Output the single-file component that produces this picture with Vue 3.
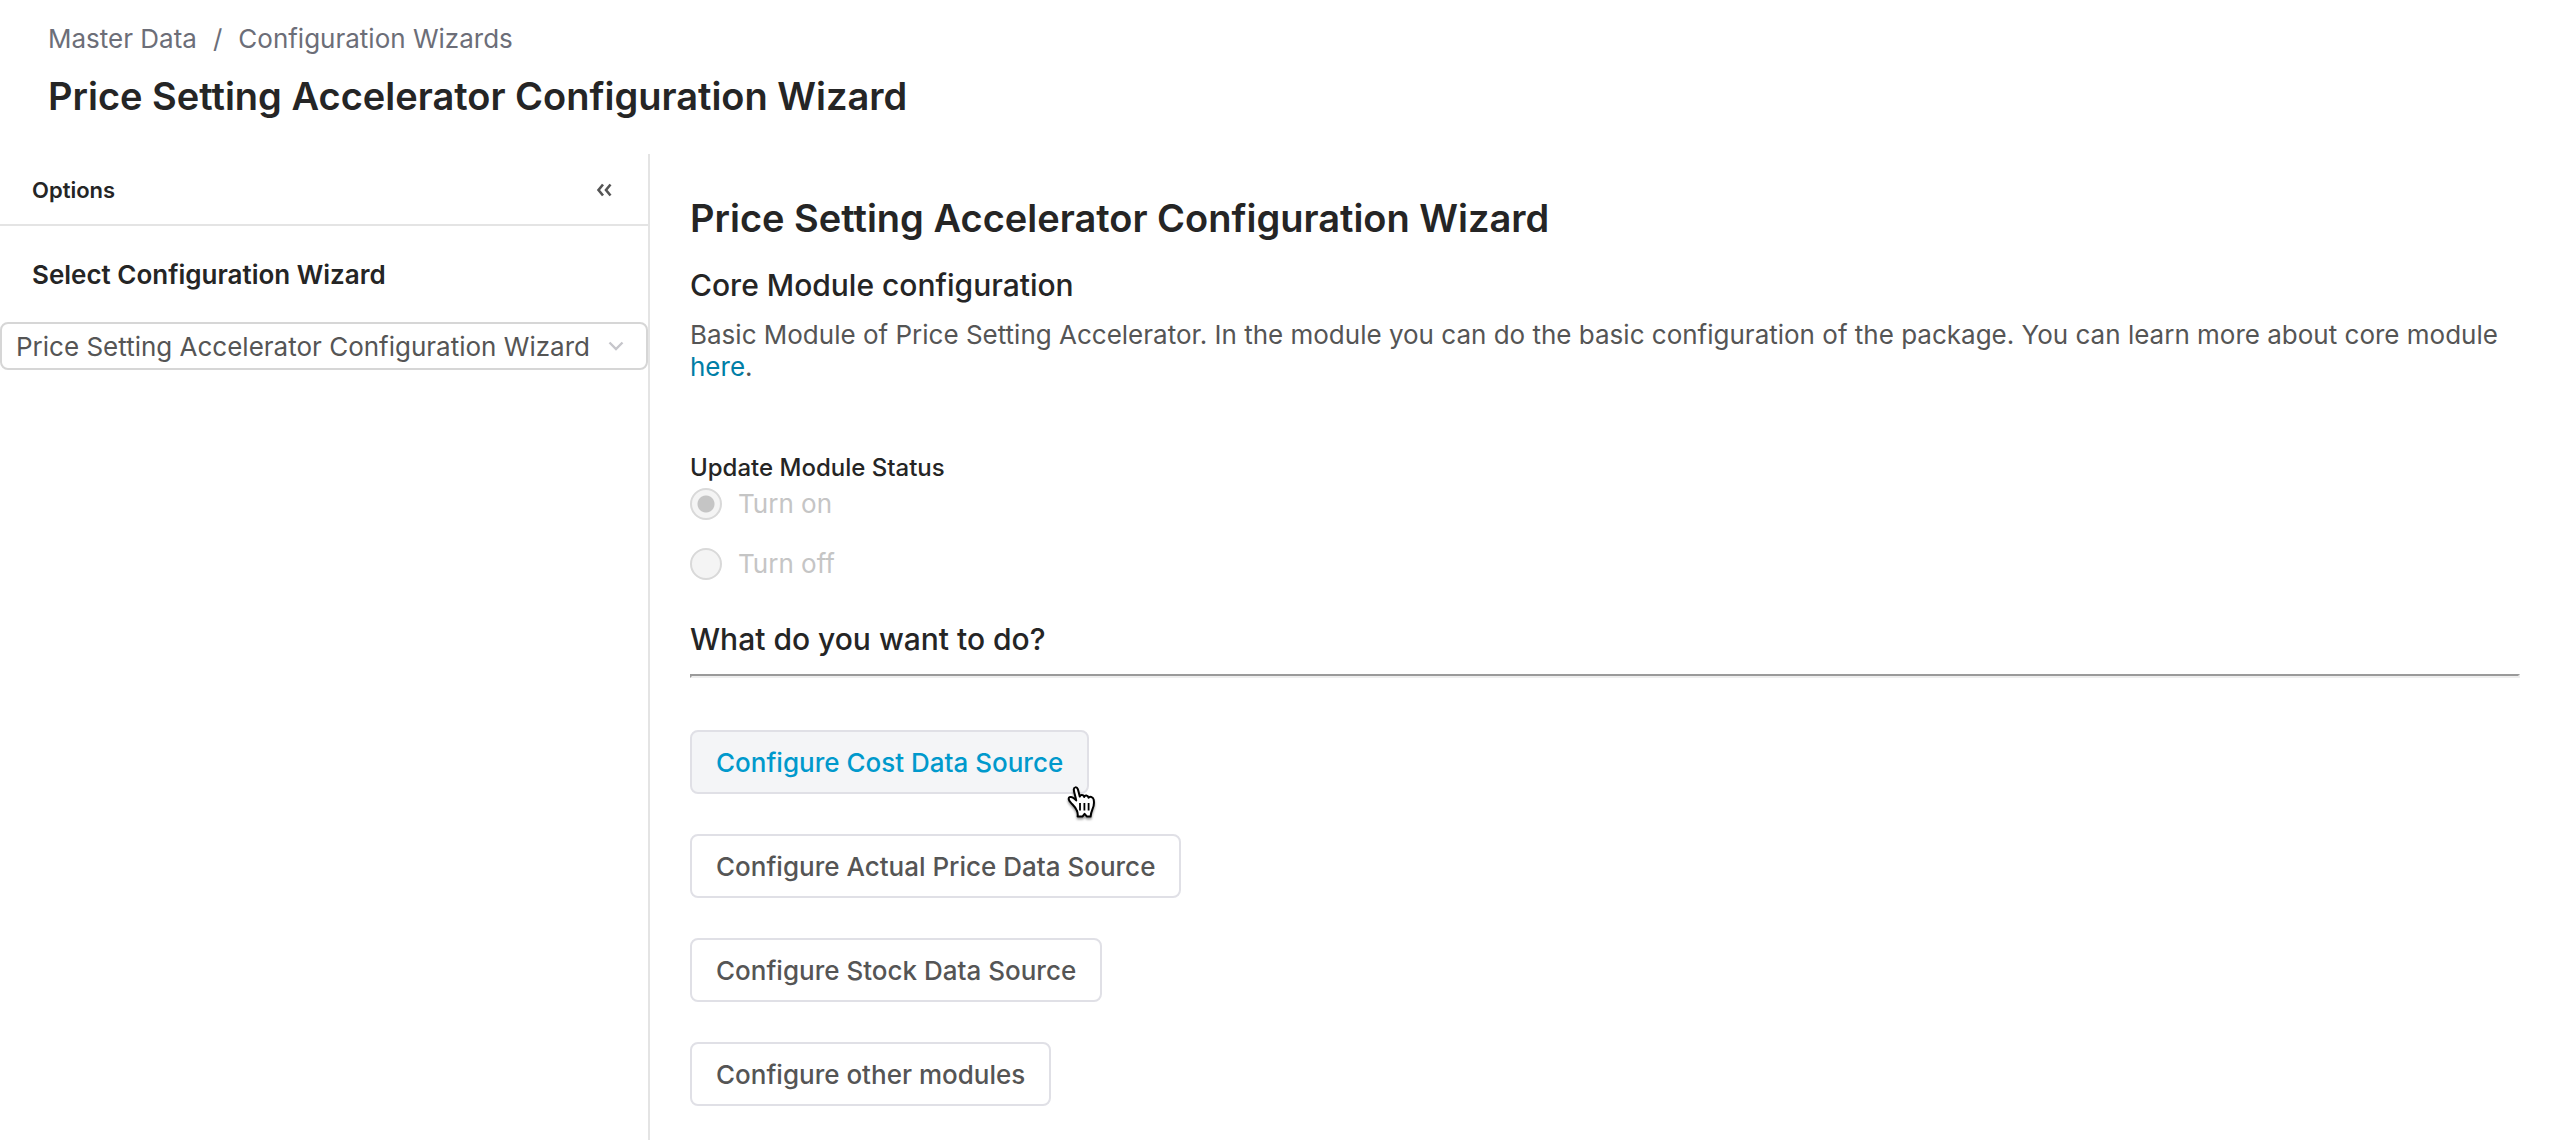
<script setup>
import { ref } from 'vue'

const crumbs = ['Master Data', 'Configuration Wizards']
const wizards = ['Price Setting Accelerator Configuration Wizard']
const wizard = ref(wizards[0])
const status = ref('on')
const statuses = [
  { value: 'on', label: 'Turn on' },
  { value: 'off', label: 'Turn off' },
]
const actions = [
  { label: 'Configure Cost Data Source', hovered: true },
  { label: 'Configure Actual Price Data Source' },
  { label: 'Configure Stock Data Source' },
  { label: 'Configure other modules' },
]
</script>

<template>
  <div class="page">
    <header class="page-header">
      <nav class="breadcrumb" aria-label="Breadcrumb">
        <template v-for="(crumb, i) in crumbs" :key="crumb">
          <span v-if="i" class="separator">/</span>
          <a href="#">{{ crumb }}</a>
        </template>
      </nav>
      <h1 class="title">Price Setting Accelerator Configuration Wizard</h1>
    </header>

    <div class="body">
      <aside class="sidebar">
        <div class="sidebar-header">
          <span class="sidebar-title">Options</span>
          <button class="collapse" type="button" aria-label="Collapse options">
            <svg width="16" height="14" viewBox="0 0 16 14" fill="none" stroke="#555" stroke-width="2.6">
              <path d="M7 1.5 L2.5 7 L7 12.5 M14.5 1.5 L10 7 L14.5 12.5" />
            </svg>
          </button>
        </div>
        <div class="sidebar-content">
          <label class="field-label" for="wizard">Select Configuration Wizard</label>
          <div class="select-box">
            <select id="wizard" v-model="wizard">
              <option v-for="w in wizards" :key="w">{{ w }}</option>
            </select>
            <svg class="chevron" width="16" height="10" viewBox="0 0 16 10" fill="none" stroke="#c6c6cb" stroke-width="2.4">
              <path d="M1.5 1.5 L8 8 L14.5 1.5" />
            </svg>
          </div>
        </div>
      </aside>

      <main class="content">
        <h2 class="title">Price Setting Accelerator Configuration Wizard</h2>
        <h3 class="subtitle">Core Module configuration</h3>
        <p class="description">
          Basic Module of Price Setting Accelerator. In the module you can do the basic configuration of the package. You can learn more about core module <a href="#">here</a>.
        </p>

        <fieldset class="status" disabled>
          <legend>Update Module Status</legend>
          <label v-for="s in statuses" :key="s.value" class="radio">
            <input v-model="status" type="radio" name="status" :value="s.value" />
            <span>{{ s.label }}</span>
          </label>
        </fieldset>

        <h3 class="subtitle question">What do you want to do?</h3>
        <hr />

        <div class="actions">
          <div v-for="a in actions" :key="a.label" class="action">
            <button type="button" class="action-button" :class="{ hovered: a.hovered }">{{ a.label }}</button>
            <svg v-if="a.hovered" class="pointer" width="34" height="38" viewBox="0 0 34 38" aria-hidden="true">
              <path
                d="M11.8 25.5 C10.5 22 8 20.2 5.6 17.4 C3.6 15 3 13.2 4.6 12.2 C6.4 11.2 8.6 12.6 11.2 15.4 C10.6 11.4 9 7.6 8.8 4.6 C8.7 2 11.8 1.4 12.8 4.2 C13.6 6.6 14 9 14.8 11.6 C15 9.4 18.6 9.2 19.2 12 C19.8 10 23 10 23.6 12.8 C24.6 11 28 11.8 28.6 14.4 C29.4 18 28.8 21.4 27.4 24.4 C26.4 26.8 25.8 28.6 25.6 31.6 L22 31.6 L19.6 28.8 L17.4 31.6 L12.6 31.6 C13 29.2 12.8 27.6 11.8 25.5 Z"
                fill="#fff" stroke="#000" stroke-width="2" stroke-linejoin="round"
              />
              <path d="M15 18 V25.5 M19.4 18 V25.5 M23.6 18 V25.5" stroke="#000" stroke-width="1.8" />
            </svg>
          </div>
        </div>
      </main>
    </div>
  </div>
</template>

<style>
body {
  background: #fff;
}
</style>

<style scoped>
.page,
.page * {
  box-sizing: border-box;
}

.page {
  display: flex;
  flex-direction: column;
  min-height: 100vh;
  font-family: Inter, "Liberation Sans", sans-serif;
  font-size: 26px;
  line-height: 32px;
  color: #555;
}

h1,
h2,
h3,
p {
  margin: 0;
}

a {
  color: inherit;
  text-decoration: none;
}

.page-header {
  display: flex;
  flex-direction: column;
  gap: 17px;
  padding: 23px 48px 34px;
}

.breadcrumb {
  display: flex;
  gap: 16px;
  color: #6c6e78;
}

.title {
  font-size: 38px;
  line-height: 48px;
  font-weight: 600;
  color: #252525;
}

.body {
  display: flex;
  flex: 1;
}

.sidebar {
  flex: none;
  width: 650px;
  border-right: 2px solid #e4e4e4;
}

.sidebar-header {
  display: flex;
  align-items: center;
  justify-content: space-between;
  height: 72px;
  padding: 2px 36px 0 32px;
  border-bottom: 2px solid #e4e4e4;
}

.sidebar-title {
  font-size: 22px;
  font-weight: 600;
  color: #252525;
}

.collapse {
  display: flex;
  padding: 0;
  border: 0;
  background: none;
}

.sidebar-content {
  display: flex;
  flex-direction: column;
  gap: 31px;
  padding-top: 33px;
}

.field-label {
  padding: 0 32px;
  font-weight: 600;
  color: #252525;
}

.select-box {
  position: relative;
}

select {
  display: block;
  width: 100%;
  height: 48px;
  padding: 1px 48px 0 14px;
  border: 2px solid #d6d6d6;
  border-radius: 8px;
  appearance: none;
  background: #fff;
  font: inherit;
  color: #555;
}

.chevron {
  position: absolute;
  top: 19px;
  right: 24px;
  pointer-events: none;
}

.content {
  flex: 1;
  min-width: 0;
  padding: 40px 40px 34px;
}

.subtitle {
  margin-top: 23px;
  font-size: 30px;
  line-height: 40px;
  font-weight: 500;
  color: #252525;
}

.description {
  margin-top: 14px;
}

.description a {
  color: #007ea6;
}

.status {
  display: flex;
  flex-direction: column;
  gap: 28px;
  margin: 69px 0 0;
  padding: 0;
  border: 0;
}

.status legend {
  margin-bottom: 4px;
  padding: 0;
  font-size: 24px;
  font-weight: 500;
  color: #252525;
}

.radio {
  display: flex;
  align-items: center;
  gap: 16px;
  color: #c5c5c5;
}

.radio input {
  width: 32px;
  height: 32px;
  margin: 0;
  border: 2px solid #d9d9d9;
  border-radius: 50%;
  appearance: none;
  background: #f4f4f4;
}

.radio input:checked {
  background: radial-gradient(circle, #c5c5c5 8px, #f4f4f4 9px);
}

.question {
  margin-top: 39px;
}

hr {
  height: 4px;
  margin: 15px 0 0;
  border: 2px solid;
  border-color: #9a9a9a #eee #eee #9a9a9a;
}

.actions {
  display: flex;
  flex-direction: column;
  align-items: flex-start;
  gap: 40px;
  margin-top: 52px;
}

.action {
  position: relative;
}

.action-button {
  display: block;
  height: 64px;
  padding: 1px 24px 0;
  border: 2px solid #e0e0e6;
  border-radius: 8px;
  background: #fff;
  font: inherit;
  font-weight: 500;
  color: #555;
}

.action-button.hovered {
  background: #f4f5f7;
  color: #0099cc;
  cursor: pointer;
}

.pointer {
  position: absolute;
  right: -10px;
  bottom: -29px;
  filter: drop-shadow(0 2px 1px rgba(0, 0, 0, 0.4));
  pointer-events: none;
}
</style>
